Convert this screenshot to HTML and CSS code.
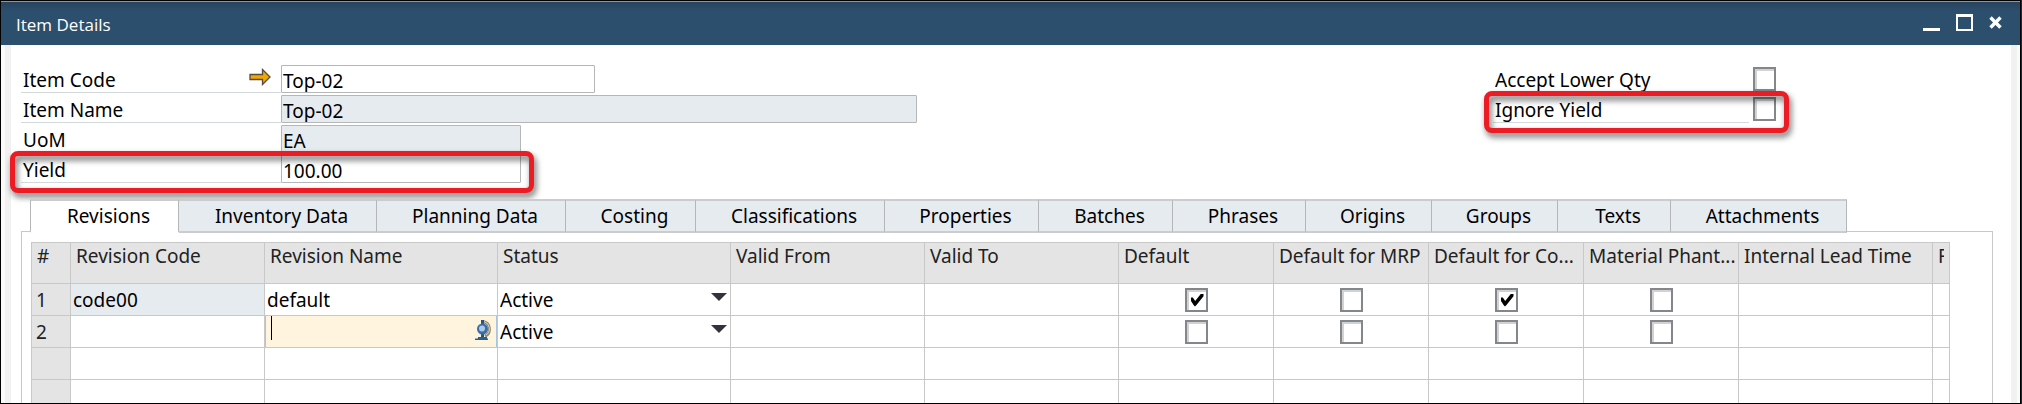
FILE: index.html
```html
<!DOCTYPE html>
<html lang="en">
<head>
<meta charset="utf-8">
<title>Item Details</title>
<link rel="stylesheet" href="styles.css">
</head>
<body>
<main class="window">
  <header class="titlebar">
    <h1 class="title">Item Details</h1>
    <div class="controls">
      <button class="control" type="button" aria-label="Minimize"><svg width="17" height="17" viewBox="0 0 17 17"><path d="M0 14h17v3H0z" fill="#fff"/></svg></button>
      <button class="control" type="button" aria-label="Maximize"><svg width="17" height="17" viewBox="0 0 17 17"><path d="M0 0h17v17H0zM2 3v12h13V3z" fill="#fff" fill-rule="evenodd"/></svg></button>
      <button class="control" type="button" aria-label="Close"><svg width="13" height="17" viewBox="0 0 13 17"><path d="M1.500 3.500l10 10M11.500 3.500l-10 10" stroke="#fff" stroke-width="3.400"/></svg></button>
    </div>
  </header>
  <div class="content">
    <form class="form">
      <div class="fields">
        <div class="field">
          <label class="label" for="code">Item Code</label>
          <svg class="arrow" width="22" height="18" viewBox="0 0 22 18"><path d="M1 6.500h12.500V1.500L21 9l-7.500 7.500v-5H1z" fill="#f0a800" stroke="#5c4a3c" stroke-width="1.300"/></svg>
          <input class="input input-medium" id="code" value="Top-02">
        </div>
        <div class="field">
          <label class="label" for="name">Item Name</label>
          <input class="input input-wide locked" id="name" value="Top-02" readonly>
        </div>
        <div class="field">
          <label class="label" for="uom">UoM</label>
          <input class="input locked" id="uom" value="EA" readonly>
        </div>
        <div class="field">
          <label class="label" for="yield">Yield</label>
          <input class="input" id="yield" value="100.00">
          <span class="highlight"></span>
        </div>
      </div>
      <div class="options">
        <div class="option">
          <label class="label" for="lower">Accept Lower Qty</label>
          <input class="check" type="checkbox" id="lower">
        </div>
        <div class="option">
          <label class="label" for="ignore">Ignore Yield</label>
          <input class="check" type="checkbox" id="ignore">
          <span class="highlight"></span>
        </div>
      </div>
    </form>
    <nav class="tabs" role="tablist">
      <button class="tab active" type="button" role="tab" aria-selected="true">Revisions</button>
      <button class="tab" type="button" role="tab">Inventory Data</button>
      <button class="tab" type="button" role="tab">Planning Data</button>
      <button class="tab" type="button" role="tab">Costing</button>
      <button class="tab" type="button" role="tab">Classifications</button>
      <button class="tab" type="button" role="tab">Properties</button>
      <button class="tab" type="button" role="tab">Batches</button>
      <button class="tab" type="button" role="tab">Phrases</button>
      <button class="tab" type="button" role="tab">Origins</button>
      <button class="tab" type="button" role="tab">Groups</button>
      <button class="tab" type="button" role="tab">Texts</button>
      <button class="tab" type="button" role="tab">Attachments</button>
    </nav>
    <section class="panel">
      <table class="grid">
        <colgroup>
          <col class="col-num"><col class="col-date"><col class="col-text"><col class="col-text"><col class="col-date"><col class="col-date"><col class="col-flag"><col class="col-flag"><col class="col-flag"><col class="col-flag"><col class="col-date"><col class="col-rest">
        </colgroup>
        <thead>
          <tr><th>#</th><th>Revision Code</th><th>Revision Name</th><th>Status</th><th>Valid From</th><th>Valid To</th><th>Default</th><th>Default for MRP</th><th>Default for Co...</th><th>Material Phant...</th><th>Internal Lead Time</th><th><div class="clip">R</div></th></tr>
        </thead>
        <tbody>
          <tr>
            <td class="num">1</td>
            <td class="locked"><input class="cell" aria-label="Revision code 1" value="code00" readonly></td>
            <td><input class="cell" aria-label="Revision name 1" value="default"></td>
            <td><div class="pick"><select class="cell" aria-label="Status 1"><option>Active</option></select><svg class="caret" width="16" height="8" viewBox="0 0 16 8"><path d="M0 0h16L8 8z" fill="#33343b"/></svg></div></td>
            <td></td><td></td>
            <td class="flag"><input class="check" type="checkbox" aria-label="Default 1" checked></td>
            <td class="flag"><input class="check" type="checkbox" aria-label="Default for MRP 1"></td>
            <td class="flag"><input class="check" type="checkbox" aria-label="Default for costing 1" checked></td>
            <td class="flag"><input class="check" type="checkbox" aria-label="Material phantom 1"></td>
            <td></td><td></td>
          </tr>
          <tr>
            <td class="num">2</td>
            <td><input class="cell" aria-label="Revision code 2"></td>
            <td><div class="editing"><span class="cursor"></span><input class="cell" aria-label="Revision name 2">
              <svg class="globe" width="17" height="21" viewBox="0 0 17 21"><path d="M8 1.500a7.800 7.800 0 0 1 2 14.700" fill="none" stroke="#8f8878" stroke-width="3"/><path d="M9 1.500a7.500 7.500 0 0 1 2 13.500" fill="none" stroke="#d8d2c0" stroke-width="1"/><path d="M6 0h3v18H6z" fill="#28527f"/><circle cx="7.500" cy="9" r="5.500" fill="#3a6ea5"/><circle cx="7" cy="8.500" r="3" fill="#a9c8ea"/><path d="M3 17h9v1.500h1V20H0v-1.500h3z" fill="#28608f"/></svg></div></td>
            <td><div class="pick"><select class="cell" aria-label="Status 2"><option>Active</option></select><svg class="caret" width="16" height="8" viewBox="0 0 16 8"><path d="M0 0h16L8 8z" fill="#33343b"/></svg></div></td>
            <td></td><td></td>
            <td class="flag"><input class="check" type="checkbox" aria-label="Default 2"></td>
            <td class="flag"><input class="check" type="checkbox" aria-label="Default for MRP 2"></td>
            <td class="flag"><input class="check" type="checkbox" aria-label="Default for costing 2"></td>
            <td class="flag"><input class="check" type="checkbox" aria-label="Material phantom 2"></td>
            <td></td><td></td>
          </tr>
          <tr><td class="num"></td><td></td><td></td><td></td><td></td><td></td><td></td><td></td><td></td><td></td><td></td><td></td></tr>
          <tr><td class="num"></td><td></td><td></td><td></td><td></td><td></td><td></td><td></td><td></td><td></td><td></td><td></td></tr>
        </tbody>
      </table>
    </section>
  </div>
</main>
</body>
</html>
```
FILE: styles.css
```css
* { box-sizing: border-box; }

body {
  margin: 0;
  background: #1c2b3c;
  color: #000;
  font: 19px/24px "Noto Sans", "Open Sans", sans-serif;
}

button, input, select {
  margin: 0;
  font: inherit;
  color: inherit;
}

.window {
  display: flex;
  flex-direction: column;
  height: 100vh;
  margin-right: 1px;
  border: 1px solid #000;
  overflow: hidden;
}

/* Title bar */
.titlebar {
  display: flex;
  flex: none;
  align-items: center;
  justify-content: space-between;
  height: 44px;
  padding: 0 18px 2px 15px;
  border-top: 1px solid #c98f1f;
  background: linear-gradient(#28445e, #2d4f6e 10px);
  color: #fff;
}

.title {
  margin: 0;
  padding-top: 4px;
  font: 400 17px/24px "Open Sans", sans-serif;
}

.controls {
  display: flex;
  gap: 16px;
}

.control {
  display: flex;
  padding: 0;
  border: 0;
  background: none;
}

.content {
  display: flex;
  flex: 1;
  flex-direction: column;
  min-height: 0;
  padding: 20px 17px 0 10px;
  border: solid #fafafa;
  border-width: 0 3px 0 4px;
  background: #fff;
  box-shadow: inset 6px 0 #f1f1f1, inset -6px 0 #f1f1f1;
}

/* Item form */
.form {
  display: flex;
  justify-content: space-between;
  padding: 0 224px 0 6px;
}

.fields, .options {
  display: flex;
  flex-direction: column;
  gap: 2px;
}

.field, .option {
  position: relative;
  display: flex;
  height: 28px;
}

.field { width: 500px; }

.label {
  width: 260px;
  flex: none;
  padding: 4px 2px 0;
  border-bottom: 1px solid #d3d8dc;
  line-height: 23px;
}

.option { gap: 4px; }
.option .label { width: 256px; }
.option .check { margin-top: 2px; }

.arrow {
  position: absolute;
  left: 228px;
  top: 3px;
}

.input {
  flex: none;
  width: 240px;
  height: 28px;
  padding: 3px 1px 0;
  border: 1px solid #b4b6b8;
  border-radius: 1px;
  background: #fff;
  outline: 0;
}

.input-medium { width: 314px; }
.input-wide { width: 636px; }
.locked { background: #e6ebf0; }

.highlight {
  position: absolute;
  inset: -4px -13px -10px -11px;
  border: 5px solid #ed1c24;
  border-radius: 8px;
  filter: drop-shadow(2px 4px 3px rgba(0, 0, 0, 0.6));
  pointer-events: none;
}

.option .highlight { left: -9px; }

.check {
  position: relative;
  flex: none;
  width: 23px;
  height: 24px;
  border: 2px solid #82878b;
  background: #fff;
  box-shadow: inset 2px 2px #d2d2d2;
  appearance: none;
}

.check:checked::before {
  content: "";
  position: absolute;
  left: 4px;
  top: 4px;
  width: 13px;
  height: 13px;
  background: #000;
  clip-path: polygon(0 30%, 18% 30%, 36% 58%, 82% 0, 100% 0, 100% 22%, 46% 88%, 34% 100%, 24% 88%, 0 52%);
}

/* Tabs */
.tabs {
  display: grid;
  flex: none;
  grid-template-columns: 149px 198px 189px 130px 189px 154px 134px 133px 126px 126px 113px 176px;
  margin-top: 16px;
  padding-left: 15px;
  position: relative;
}

.tab {
  height: 34px;
  padding: 0 0 0 8px;
  border: solid #cacccd;
  border-width: 2px 1px 2px 0;
  border-right-color: #b4b6b8;
  background: #e6ebf0;
  text-align: center;
  white-space: nowrap;
}

.tab.active {
  border-left: 1px solid #b4b6b8;
  border-bottom-color: #fff;
  background: #fff;
}

.panel {
  flex: 1;
  min-height: 0;
  margin: -2px 7px 0 6px;
  padding: 10px 42px 0 9px;
  border: 1px solid #c8c8c8;
  border-bottom: 0;
  overflow: hidden;
}

/* Revision grid */
.grid {
  width: 100%;
  table-layout: fixed;
  border: solid #c8c8c8;
  border-width: 1px 0 0 1px;
  border-collapse: separate;
  border-spacing: 0;
}

.col-num { width: 39px; }
.col-text { width: 233px; }
.col-date { width: 194px; }
.col-flag { width: 155px; }
.col-rest { width: 17px; }

.grid th, .grid td {
  border: solid #c8c8c8;
  border-width: 0 1px 1px 0;
}

.grid th {
  height: 41px;
  padding: 0 0 0 5px;
  background: #e4e4e4;
  color: #222;
  font-weight: 400;
  line-height: 26px;
  text-align: left;
  vertical-align: top;
  white-space: nowrap;
}

.clip {
  width: 6px;
  overflow: hidden;
}

.grid td {
  height: 32px;
  padding: 0;
}

.grid .num {
  padding-left: 4px;
  background: #e4e4e4;
  color: #222;
}

.grid .flag { text-align: center; }
.flag .check { display: block; margin: 0 auto; }

.cell {
  display: block;
  width: 100%;
  min-width: 0;
  height: 31px;
  padding: 1px 2px 0;
  border: 0;
  outline: 0;
  background: none;
  appearance: none;
}

.pick {
  display: flex;
}

.caret {
  flex: none;
  margin: 9px 3px 0 0;
}

.editing {
  display: flex;
  padding-right: 4px;
  border: solid #a9c4e0;
  border-width: 0 1px;
  background: #fff4de;
}

.cursor {
  flex: none;
  width: 1px;
  height: 24px;
  margin-left: 5px;
  background: #000;
}

.globe {
  flex: none;
  margin-top: 4px;
}
```
